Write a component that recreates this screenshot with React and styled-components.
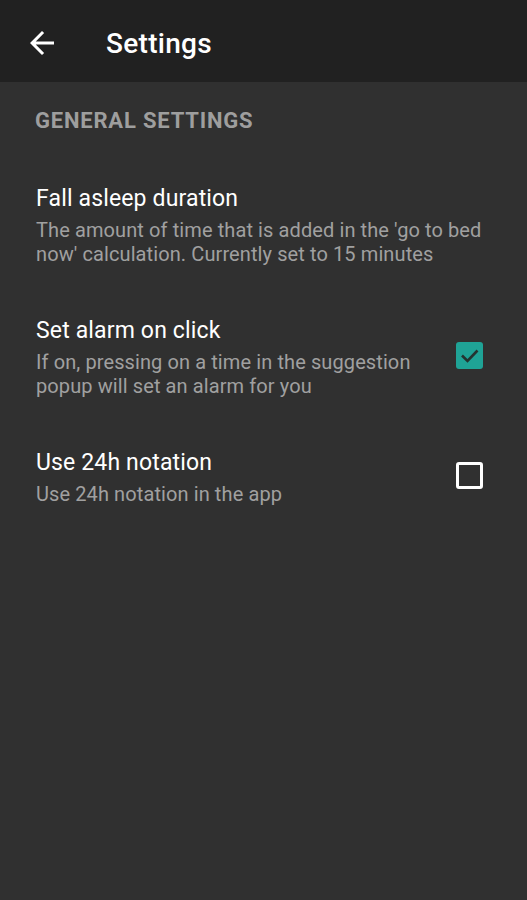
import React, { useState } from "react";
import styled, { createGlobalStyle } from "styled-components";

const GlobalStyle = createGlobalStyle`
  html, body {
    margin: 0;
    padding: 0;
    background: #303030;
  }
  body {
    font-family: Roboto, "Noto Sans", sans-serif;
    -webkit-font-smoothing: antialiased;
  }
`;

const Screen = styled.div`
  width: 100%;
  min-height: 900px;
  display: flex;
  flex-direction: column;
  background: #303030;
`;

const Toolbar = styled.header`
  height: 82px;
  display: flex;
  align-items: center;
  padding: 4px 0 0 24px;
  box-sizing: border-box;
  background: #212121;
`;

const BackButton = styled.button`
  width: 36px;
  height: 36px;
  padding: 0;
  margin: 0 46px 0 0;
  border: none;
  background: transparent;
  display: flex;
  align-items: center;
  justify-content: center;
  color: #ffffff;
  cursor: pointer;
`;

const ToolbarTitle = styled.h1`
  margin: 0;
  font-size: 28px;
  font-weight: 500;
  color: #ffffff;
  letter-spacing: 0.3px;
`;

const Content = styled.main`
  display: flex;
  flex-direction: column;
  padding: 25px 0 0;
`;

const SectionTitle = styled.div`
  padding: 0 36px 0 35px;
  margin-bottom: 24px;
  font-size: 22px;
  line-height: 28px;
  font-weight: 700;
  color: #9e9e9e;
  letter-spacing: 0.8px;
`;

const Row = styled.div`
  display: flex;
  align-items: center;
  gap: 28px;
  padding: 25px 40px 25px 36px;
  cursor: pointer;
`;

const RowText = styled.div`
  flex: 1;
  display: flex;
  flex-direction: column;
`;

const RowTitle = styled.div`
  font-size: 23px;
  line-height: 30px;
  color: #ffffff;
  letter-spacing: 0.15px;
  margin-bottom: 4px;
`;

const RowSummary = styled.div`
  font-size: 20px;
  line-height: 24px;
  color: #a0a0a0;
  letter-spacing: 0.1px;
`;

const Box = styled.span`
  flex: none;
  width: 27px;
  height: 27px;
  box-sizing: border-box;
  border-radius: 3px;
  margin: -3px 4px 0 0;
  display: flex;
  align-items: center;
  justify-content: center;
  background: ${(p) => (p.checked ? "#1fa396" : "transparent")};
  border: ${(p) => (p.checked ? "none" : "3px solid #ffffff")};
`;

function ArrowBack() {
  return (
    <svg width="36" height="36" viewBox="0 0 24 24" fill="currentColor">
      <path d="M20 11H7.83l5.59-5.59L12 4l-8 8 8 8 1.41-1.41L7.83 13H20v-2z" />
    </svg>
  );
}

function Checkbox({ checked }) {
  return (
    <Box checked={checked}>
      {checked && (
        <svg width="27" height="27" viewBox="0 0 27 27">
          <path
            d="M6 13.5l5.5 5.5 10-10.5"
            fill="none"
            stroke="#243330"
            strokeWidth="2.6"
          />
        </svg>
      )}
    </Box>
  );
}

export default function App() {
  const [alarmOnClick, setAlarmOnClick] = useState(true);
  const [use24h, setUse24h] = useState(false);

  return (
    <>
      <GlobalStyle />
      <Screen>
        <Toolbar>
          <BackButton aria-label="Back">
            <ArrowBack />
          </BackButton>
          <ToolbarTitle>Settings</ToolbarTitle>
        </Toolbar>
        <Content>
          <SectionTitle>GENERAL SETTINGS</SectionTitle>
          <Row>
            <RowText>
              <RowTitle>Fall asleep duration</RowTitle>
              <RowSummary>
                The amount of time that is added in the 'go to bed now'
                calculation. Currently set to 15 minutes
              </RowSummary>
            </RowText>
          </Row>
          <Row onClick={() => setAlarmOnClick(!alarmOnClick)}>
            <RowText>
              <RowTitle>Set alarm on click</RowTitle>
              <RowSummary>
                If on, pressing on a time in the suggestion popup will set an
                alarm for you
              </RowSummary>
            </RowText>
            <Checkbox checked={alarmOnClick} />
          </Row>
          <Row onClick={() => setUse24h(!use24h)}>
            <RowText>
              <RowTitle>Use 24h notation</RowTitle>
              <RowSummary>Use 24h notation in the app</RowSummary>
            </RowText>
            <Checkbox checked={use24h} />
          </Row>
        </Content>
      </Screen>
    </>
  );
}
